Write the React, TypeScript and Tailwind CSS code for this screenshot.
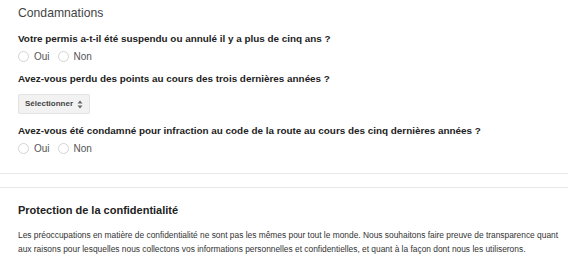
export default function App() {
  const Radio = ({ label }: { label: string }) => (
    <label className="flex items-center gap-[5px] mr-[8px]">
      <span className="w-[11px] h-[11px] rounded-full border border-[#d4d4d4] bg-white" />
      <span>{label}</span>
    </label>
  );

  return (
    <div className="w-[568px] h-[267px] overflow-hidden bg-white text-[#333] font-['Liberation_Sans',Arial,sans-serif]">
      <section className="px-[18px] pt-[5px] pb-[17px] border-b border-[#e8e8e8]">
        <h2 className="text-[12.2px] leading-[16px] text-[#444] mb-[11px]">Condamnations</h2>

        <p className="text-[9.9px] font-bold leading-[14px] text-[#222]">
          Votre permis a-t-il été suspendu ou annulé il y a plus de cinq ans ?
        </p>
        <div className="flex items-center mt-[3px] text-[10px] text-[#555]">
          <Radio label="Oui" />
          <Radio label="Non" />
        </div>

        <p className="mt-[8px] text-[9.9px] font-bold leading-[14px] text-[#222]">
          Avez-vous perdu des points au cours des trois dernières années ?
        </p>
        <button className="mt-[8px] flex items-center gap-[4px] h-[20px] px-[6px] bg-[#f2f2f2] border border-[#e2e2e2] rounded-[2px] text-[8px] font-bold text-[#444]">
          Sélectionner
          <svg width="6" height="9" viewBox="0 0 6 9" className="text-[#666]">
            <path d="M3 0.5 L5.5 3.5 H0.5 Z M3 8.5 L5.5 5.5 H0.5 Z" fill="currentColor" />
          </svg>
        </button>

        <p className="mt-[10px] text-[9.9px] font-bold leading-[14px] text-[#222]">
          Avez-vous été condamné pour infraction au code de la route au cours des cinq dernières années ?
        </p>
        <div className="flex items-center mt-[3px] text-[10px] text-[#555]">
          <Radio label="Oui" />
          <Radio label="Non" />
        </div>
      </section>

      <section className="mt-[13px] border-t border-[#e8e8e8] pl-[18px] pr-[8px] pt-[15px]">
        <h3 className="text-[11px] font-bold leading-[14px] text-[#222]">
          Protection de la confidentialité
        </h3>
        <p className="mt-[11px] text-[8.4px] leading-[14px] text-[#333]">
          Les préoccupations en matière de confidentialité ne sont pas les mêmes pour tout le monde. Nous souhaitons faire preuve de transparence quant aux raisons pour lesquelles nous collectons vos informations personnelles et confidentielles, et quant à la façon dont nous les utiliserons.
        </p>
      </section>
    </div>
  );
}
